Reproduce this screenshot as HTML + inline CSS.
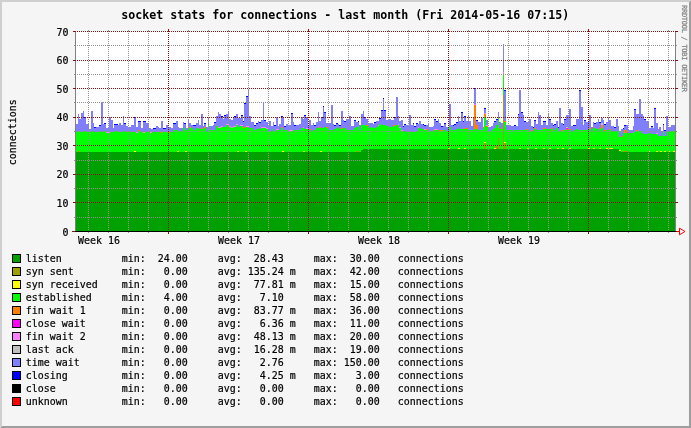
<!DOCTYPE html>
<html><head><meta charset="utf-8"><title>socket stats for connections - last month</title>
<style>
html,body{margin:0;padding:0;background:#F5F5F5;overflow:hidden}
svg{display:block;will-change:transform}
text{font-family:"DejaVu Sans Mono","Liberation Mono",monospace;fill:#000;white-space:pre}
.t{font-size:11.627px;font-weight:bold}
.l{font-size:9.966px;stroke:#000;stroke-width:0.2px}
.a{font-size:9.966px;stroke:#000;stroke-width:0.2px}
.w{font-size:7px;fill:#808080;stroke:#808080;stroke-width:0.2px}
</style></head><body>
<svg width="691" height="428" viewBox="0 0 691 428">
<rect x="0" y="0" width="691" height="428" fill="#F5F5F5"/>
<g shape-rendering="crispEdges">
<rect x="0" y="0" width="691" height="2" fill="#CFCFCF"/>
<rect x="0" y="0" width="2" height="428" fill="#CFCFCF"/>
<polygon points="691,0 691,428 0,428 2,426 689,426 689,2" fill="#9E9E9E"/>
<rect x="75" y="31" width="601" height="200" fill="#FFFFFF"/>
<path d="M75,231V124H78V114H79V119H81V113H83V111H84V117H86V124H89V129H91V111H93V123H94V127H99V125H101V102H103V124H104V123H106V128H109V117H111V120H113V128H114V124H118V125H119V123H121V125H123V116H124V123H126V126H128V127H131V125H134V117H136V127H138V121H141V128H143V121H146V123H149V128H151V129H153V128H156V126H158V127H159V128H161V121H163V128H166V125H168V127H171V128H173V123H176V121H178V127H179V128H183V122H184V123H186V128H188V119H189V123H191V125H196V123H198V120H199V125H201V114H203V126H204V123H206V127H208V118H209V126H213V125H214V122H216V116H218V112H219V114H221V116H223V119H224V115H226V114H228V112H229V119H231V120H233V117H234V116H236V114H238V118H241V115H243V121H244V103H246V96H248V90H249V116H251V122H254V125H256V123H258V121H259V122H261V120H263V103H264V120H266V122H268V125H269V121H271V126H273V122H274V125H276V117H278V126H279V124H281V116H283V118H284V126H286V124H288V125H291V113H293V122H294V125H299V124H301V117H303V119H304V115H306V117H308V125H309V120H311V125H313V123H314V125H316V122H318V112H319V121H321V117H323V106H324V112H326V123H331V105H333V124H334V125H336V123H338V124H339V125H341V111H343V120H344V121H346V119H349V116H351V126H354V120H356V122H358V121H359V125H361V114H363V111H364V117H366V119H368V123H373V124H374V122H376V121H379V118H381V110H383V98H384V110H386V120H389V119H391V120H394V117H396V97H398V116H399V121H401V120H403V126H404V124H406V125H409V115H411V125H413V123H414V126H416V123H418V124H419V121H421V124H424V125H428V123H429V127H433V126H434V119H436V121H438V119H439V123H441V126H444V123H446V127H449V104H451V125H454V124H456V122H458V116H459V121H461V112H463V121H464V116H466V121H468V116H469V121H471V126H473V117H474V88H476V120H478V122H481V118H483V127H484V108H486V120H488V127H491V126H493V123H494V121H496V119H498V112H499V122H501V123H503V44H504V90H506V125H511V126H514V125H516V126H518V114H519V90H521V112H523V115H524V121H526V122H529V119H531V126H533V127H534V120H536V124H538V112H539V115H541V125H543V121H546V125H548V114H549V119H551V123H553V125H554V124H556V121H558V127H559V108H561V123H563V124H564V119H566V115H569V109H571V126H573V125H576V119H579V90H581V107H583V125H584V120H586V122H589V115H591V127H593V122H594V123H596V122H598V119H599V122H601V118H603V120H604V124H606V122H608V118H609V120H611V126H614V127H616V119H618V126H619V131H621V129H623V128H624V125H628V130H633V126H634V109H636V114H639V99H641V114H643V116H644V119H646V121H649V128H651V126H653V128H654V108H656V123H658V129H659V127H661V131H663V124H664V130H666V116H668V127H671V125H675V231Z" fill="#8080FF"/>
<path d="M75,231V132H77V131H80V132H84V131H86V132H92V131H94V132H99V131H101V132H104V131H106V133H110V132H114V131H118V132H123V131H126V132H136V133H138V131H140V132H143V133H145V132H150V133H152V132H160V133H162V132H168V133H170V132H173V130H178V131H183V128H185V130H189V128H193V130H196V128H199V129H204V128H206V131H208V124H209V130H216V126H218V128H221V127H226V125H229V127H231V128H233V127H236V125H238V127H240V126H243V128H246V127H249V128H253V130H256V129H258V128H259V129H261V128H266V129H268V131H273V129H274V131H276V130H281V128H283V130H288V131H293V130H301V128H304V129H308V130H311V131H313V130H316V128H324V127H326V128H328V130H334V129H336V128H338V127H339V129H343V128H346V130H354V128H356V127H358V126H359V130H361V125H366V126H369V128H371V127H373V128H376V127H378V126H379V124H381V125H386V126H389V127H393V126H396V125H399V128H401V131H406V132H416V131H418V128H421V129H424V130H429V131H434V130H439V131H443V130H446V131H449V127H451V130H456V129H458V127H459V129H468V130H474V129H478V130H483V128H484V117H486V127H488V131H491V130H493V129H494V128H496V125H498V118H499V129H503V74H504V122H506V130H513V131H514V130H529V131H534V129H536V130H543V129H553V131H554V130H556V128H558V131H563V130H571V131H574V130H576V129H578V130H589V129H591V131H593V128H596V129H598V131H599V129H601V128H603V131H606V130H611V131H619V137H623V133H634V132H636V131H641V133H643V134H648V133H651V134H658V136H663V131H664V136H667V131H675V231Z" fill="#00FF00"/>
<path d="M75,231V152H361V150H363V149H619V150H621V152H675V231Z" fill="#00A000"/>
<rect x="84" y="117" width="2" height="1" fill="#0000FF"/><rect x="94" y="127" width="2" height="1" fill="#0000FF"/><rect x="99" y="125" width="2" height="1" fill="#0000FF"/><rect x="104" y="123" width="2" height="1" fill="#0000FF"/><rect x="114" y="124" width="4" height="1" fill="#0000FF"/><rect x="124" y="123" width="2" height="1" fill="#0000FF"/><rect x="134" y="117" width="2" height="1" fill="#0000FF"/><rect x="138" y="121" width="3" height="1" fill="#0000FF"/><rect x="143" y="121" width="3" height="1" fill="#0000FF"/><rect x="153" y="128" width="3" height="1" fill="#0000FF"/><rect x="163" y="128" width="3" height="1" fill="#0000FF"/><rect x="173" y="123" width="3" height="1" fill="#0000FF"/><rect x="184" y="123" width="2" height="1" fill="#0000FF"/><rect x="193" y="125" width="3" height="1" fill="#0000FF"/><rect x="204" y="123" width="2" height="1" fill="#0000FF"/><rect x="214" y="122" width="2" height="1" fill="#0000FF"/><rect x="221" y="116" width="2" height="1" fill="#0000FF"/><rect x="224" y="115" width="2" height="1" fill="#0000FF"/><rect x="234" y="116" width="2" height="1" fill="#0000FF"/><rect x="241" y="115" width="2" height="1" fill="#0000FF"/><rect x="243" y="121" width="1" height="1" fill="#0000FF"/><rect x="244" y="103" width="2" height="1" fill="#0000FF"/><rect x="246" y="96" width="2" height="1" fill="#0000FF"/><rect x="254" y="125" width="2" height="1" fill="#0000FF"/><rect x="256" y="123" width="2" height="1" fill="#0000FF"/><rect x="259" y="122" width="2" height="1" fill="#0000FF"/><rect x="264" y="120" width="2" height="1" fill="#0000FF"/><rect x="274" y="125" width="2" height="1" fill="#0000FF"/><rect x="281" y="116" width="2" height="1" fill="#0000FF"/><rect x="284" y="126" width="2" height="1" fill="#0000FF"/><rect x="291" y="113" width="2" height="1" fill="#0000FF"/><rect x="294" y="125" width="2" height="1" fill="#0000FF"/><rect x="304" y="115" width="2" height="1" fill="#0000FF"/><rect x="314" y="125" width="2" height="1" fill="#0000FF"/><rect x="321" y="117" width="2" height="1" fill="#0000FF"/><rect x="323" y="106" width="1" height="1" fill="#0000FF"/><rect x="324" y="112" width="2" height="1" fill="#0000FF"/><rect x="334" y="125" width="2" height="1" fill="#0000FF"/><rect x="336" y="123" width="2" height="1" fill="#0000FF"/><rect x="339" y="125" width="2" height="1" fill="#0000FF"/><rect x="344" y="121" width="2" height="1" fill="#0000FF"/><rect x="354" y="120" width="2" height="1" fill="#0000FF"/><rect x="358" y="121" width="1" height="1" fill="#0000FF"/><rect x="364" y="117" width="2" height="1" fill="#0000FF"/><rect x="374" y="122" width="2" height="1" fill="#0000FF"/><rect x="379" y="118" width="2" height="1" fill="#0000FF"/><rect x="381" y="110" width="2" height="1" fill="#0000FF"/><rect x="383" y="98" width="1" height="1" fill="#0000FF"/><rect x="384" y="110" width="2" height="1" fill="#0000FF"/><rect x="394" y="117" width="2" height="1" fill="#0000FF"/><rect x="403" y="126" width="1" height="1" fill="#0000FF"/><rect x="404" y="124" width="2" height="1" fill="#0000FF"/><rect x="413" y="123" width="1" height="1" fill="#0000FF"/><rect x="414" y="126" width="2" height="1" fill="#0000FF"/><rect x="416" y="123" width="2" height="1" fill="#0000FF"/><rect x="423" y="124" width="1" height="1" fill="#0000FF"/><rect x="424" y="125" width="2" height="1" fill="#0000FF"/><rect x="434" y="119" width="2" height="1" fill="#0000FF"/><rect x="436" y="121" width="2" height="1" fill="#0000FF"/><rect x="441" y="126" width="2" height="1" fill="#0000FF"/><rect x="444" y="123" width="2" height="1" fill="#0000FF"/><rect x="453" y="125" width="1" height="1" fill="#0000FF"/><rect x="454" y="124" width="2" height="1" fill="#0000FF"/><rect x="456" y="122" width="2" height="1" fill="#0000FF"/><rect x="461" y="112" width="2" height="1" fill="#0000FF"/><rect x="463" y="121" width="1" height="1" fill="#0000FF"/><rect x="464" y="116" width="2" height="1" fill="#0000FF"/><rect x="476" y="120" width="2" height="1" fill="#0000FF"/><rect x="484" y="108" width="2" height="1" fill="#0000FF"/><rect x="494" y="121" width="2" height="1" fill="#0000FF"/><rect x="496" y="119" width="2" height="1" fill="#0000FF"/><rect x="504" y="90" width="2" height="1" fill="#0000FF"/><rect x="514" y="125" width="2" height="1" fill="#0000FF"/><rect x="518" y="114" width="1" height="1" fill="#0000FF"/><rect x="521" y="112" width="2" height="1" fill="#0000FF"/><rect x="524" y="121" width="2" height="1" fill="#0000FF"/><rect x="533" y="127" width="1" height="1" fill="#0000FF"/><rect x="534" y="120" width="2" height="1" fill="#0000FF"/><rect x="543" y="121" width="3" height="1" fill="#0000FF"/><rect x="549" y="119" width="2" height="1" fill="#0000FF"/><rect x="553" y="125" width="1" height="1" fill="#0000FF"/><rect x="554" y="124" width="2" height="1" fill="#0000FF"/><rect x="558" y="127" width="1" height="1" fill="#0000FF"/><rect x="563" y="124" width="1" height="1" fill="#0000FF"/><rect x="564" y="119" width="2" height="1" fill="#0000FF"/><rect x="573" y="125" width="3" height="1" fill="#0000FF"/><rect x="579" y="90" width="2" height="1" fill="#0000FF"/><rect x="584" y="120" width="2" height="1" fill="#0000FF"/><rect x="594" y="123" width="2" height="1" fill="#0000FF"/><rect x="599" y="122" width="2" height="1" fill="#0000FF"/><rect x="604" y="124" width="2" height="1" fill="#0000FF"/><rect x="614" y="127" width="2" height="1" fill="#0000FF"/><rect x="623" y="128" width="1" height="1" fill="#0000FF"/><rect x="624" y="125" width="2" height="1" fill="#0000FF"/><rect x="634" y="109" width="2" height="1" fill="#0000FF"/><rect x="644" y="119" width="2" height="1" fill="#0000FF"/><rect x="651" y="126" width="2" height="1" fill="#0000FF"/><rect x="654" y="108" width="2" height="1" fill="#0000FF"/><rect x="663" y="124" width="1" height="1" fill="#0000FF"/><rect x="664" y="130" width="2" height="1" fill="#0000FF"/><rect x="106" y="132" width="4" height="1" fill="#FF80FF"/><rect x="136" y="132" width="2" height="1" fill="#FF80FF"/><rect x="138" y="130" width="2" height="1" fill="#FF8000"/><rect x="143" y="132" width="2" height="1" fill="#FF80FF"/><rect x="150" y="132" width="2" height="1" fill="#FF80FF"/><rect x="160" y="132" width="2" height="1" fill="#FF8000"/><rect x="168" y="132" width="2" height="1" fill="#FF8000"/><rect x="189" y="127" width="2" height="1" fill="#FF8000"/><rect x="201" y="128" width="2" height="1" fill="#FF8000"/><rect x="204" y="127" width="2" height="1" fill="#FF8000"/><rect x="208" y="123" width="1" height="1" fill="#FF8000"/><rect x="218" y="127" width="3" height="1" fill="#FF80FF"/><rect x="221" y="126" width="2" height="1" fill="#FF80FF"/><rect x="226" y="124" width="3" height="1" fill="#FF80FF"/><rect x="229" y="126" width="2" height="1" fill="#FF80FF"/><rect x="231" y="127" width="2" height="1" fill="#FF80FF"/><rect x="233" y="126" width="3" height="1" fill="#FF80FF"/><rect x="236" y="124" width="2" height="1" fill="#FF80FF"/><rect x="240" y="125" width="3" height="1" fill="#FF80FF"/><rect x="243" y="127" width="3" height="1" fill="#FF8000"/><rect x="246" y="126" width="3" height="1" fill="#FF80FF"/><rect x="261" y="127" width="5" height="1" fill="#FF80FF"/><rect x="266" y="128" width="2" height="1" fill="#FF80FF"/><rect x="276" y="129" width="3" height="1" fill="#FF80FF"/><rect x="281" y="127" width="2" height="1" fill="#FF8000"/><rect x="289" y="130" width="4" height="1" fill="#FF80FF"/><rect x="303" y="127" width="1" height="1" fill="#FF80FF"/><rect x="306" y="128" width="2" height="1" fill="#FF80FF"/><rect x="308" y="129" width="3" height="1" fill="#FF8000"/><rect x="319" y="127" width="2" height="1" fill="#FF8000"/><rect x="326" y="127" width="2" height="1" fill="#FF8000"/><rect x="341" y="128" width="2" height="1" fill="#FF8000"/><rect x="366" y="125" width="3" height="1" fill="#FF8000"/><rect x="378" y="125" width="1" height="1" fill="#FF80FF"/><rect x="388" y="125" width="1" height="1" fill="#FF80FF"/><rect x="393" y="125" width="3" height="1" fill="#FF8000"/><rect x="398" y="124" width="1" height="1" fill="#FF80FF"/><rect x="399" y="127" width="2" height="1" fill="#FF80FF"/><rect x="401" y="130" width="2" height="1" fill="#FF80FF"/><rect x="418" y="127" width="1" height="1" fill="#FF80FF"/><rect x="424" y="129" width="2" height="1" fill="#FF80FF"/><rect x="426" y="129" width="3" height="1" fill="#FF8000"/><rect x="433" y="130" width="1" height="1" fill="#FF8000"/><rect x="434" y="129" width="4" height="1" fill="#FF80FF"/><rect x="439" y="130" width="4" height="1" fill="#FF8000"/><rect x="464" y="128" width="4" height="1" fill="#FF8000"/><rect x="483" y="127" width="1" height="1" fill="#FF8000"/><rect x="484" y="116" width="2" height="1" fill="#FF8000"/><rect x="486" y="126" width="2" height="1" fill="#FF8000"/><rect x="499" y="128" width="2" height="1" fill="#FF8000"/><rect x="504" y="121" width="2" height="1" fill="#FF8000"/><rect x="526" y="129" width="3" height="1" fill="#FF8000"/><rect x="531" y="130" width="2" height="1" fill="#FF8000"/><rect x="534" y="128" width="2" height="1" fill="#FF8000"/><rect x="543" y="128" width="3" height="1" fill="#FF8000"/><rect x="551" y="128" width="2" height="1" fill="#FF8000"/><rect x="553" y="130" width="1" height="1" fill="#FF8000"/><rect x="561" y="130" width="2" height="1" fill="#FF8000"/><rect x="566" y="129" width="2" height="1" fill="#FF8000"/><rect x="568" y="129" width="3" height="1" fill="#FF8000"/><rect x="589" y="128" width="2" height="1" fill="#FF8000"/><rect x="593" y="127" width="1" height="1" fill="#FF8000"/><rect x="599" y="128" width="2" height="1" fill="#FF8000"/><rect x="604" y="130" width="2" height="1" fill="#FF8000"/><rect x="608" y="129" width="3" height="1" fill="#FF8000"/><rect x="621" y="136" width="2" height="1" fill="#FF8000"/><rect x="636" y="130" width="2" height="1" fill="#FF8000"/><rect x="656" y="133" width="2" height="1" fill="#FF80FF"/><rect x="75" y="128" width="1" height="3" fill="#0000FF"/><rect x="474" y="105" width="2" height="24" fill="#FF8000"/><rect x="474" y="104" width="2" height="1" fill="#FF80FF"/><rect x="476" y="125" width="2" height="4" fill="#FF8000"/><rect x="484" y="114" width="2" height="3" fill="#FF8000"/><rect x="484" y="113" width="2" height="1" fill="#FF80FF"/><rect x="486" y="125" width="2" height="1" fill="#FF80FF"/><rect x="503" y="95" width="1" height="54" fill="#A0A000"/><rect x="503" y="73" width="1" height="2" fill="#FF8000"/><rect x="503" y="72" width="1" height="1" fill="#FF80FF"/><rect x="601" y="125" width="2" height="3" fill="#FF8000"/><rect x="601" y="123" width="2" height="2" fill="#C0C0C0"/><rect x="566" y="127" width="2" height="1" fill="#C0C0C0"/><rect x="566" y="128" width="2" height="1" fill="#FF00FF"/><rect x="624" y="130" width="3" height="3" fill="#FF8000"/><rect x="356" y="151" width="3" height="1" fill="#A0A000"/><rect x="78" y="151" width="2" height="1" fill="#A0A000"/><rect x="248" y="151" width="1" height="1" fill="#FF8000"/><rect x="208" y="147" width="1" height="1" fill="#FFFF00"/><rect x="208" y="149" width="1" height="1" fill="#FFFF00"/><rect x="208" y="151" width="1" height="1" fill="#FFFF00"/><rect x="474" y="88" width="2" height="1" fill="#0000FF"/><rect x="484" y="143" width="2" height="6" fill="#A0A000"/><rect x="484" y="142" width="2" height="1" fill="#FFFF00"/><rect x="498" y="138" width="1" height="11" fill="#A0A000"/><rect x="495" y="146" width="3" height="3" fill="#A0A000"/><rect x="494" y="148" width="2" height="1" fill="#FFFF00"/><rect x="504" y="143" width="2" height="6" fill="#A0A000"/><rect x="504" y="142" width="2" height="1" fill="#FFFF00"/><rect x="475" y="148" width="2" height="1" fill="#A0A000"/><rect x="448" y="148" width="2" height="1" fill="#FFFF00"/><rect x="458" y="148" width="2" height="1" fill="#FFFF00"/><rect x="464" y="148" width="2" height="1" fill="#FFFF00"/><rect x="519" y="148" width="2" height="1" fill="#FFFF00"/><rect x="527" y="148" width="2" height="1" fill="#FFFF00"/><rect x="535" y="148" width="2" height="1" fill="#FFFF00"/><rect x="543" y="148" width="2" height="1" fill="#FFFF00"/><rect x="549" y="148" width="2" height="1" fill="#FFFF00"/><rect x="557" y="148" width="2" height="1" fill="#FFFF00"/><rect x="562" y="148" width="2" height="1" fill="#FFFF00"/><rect x="569" y="148" width="2" height="1" fill="#FFFF00"/><rect x="588" y="148" width="2" height="1" fill="#FFFF00"/><rect x="593" y="148" width="2" height="1" fill="#FFFF00"/><rect x="599" y="148" width="2" height="1" fill="#FFFF00"/><rect x="606" y="148" width="2" height="1" fill="#FFFF00"/><rect x="609" y="148" width="2" height="1" fill="#FFFF00"/><rect x="611" y="148" width="2" height="1" fill="#FFFF00"/><rect x="619" y="150" width="2" height="1" fill="#FFFF00"/><rect x="134" y="151" width="2" height="1" fill="#FFFF00"/><rect x="177" y="151" width="2" height="1" fill="#FFFF00"/><rect x="185" y="151" width="2" height="1" fill="#FFFF00"/><rect x="237" y="151" width="2" height="1" fill="#FFFF00"/><rect x="245" y="151" width="2" height="1" fill="#FFFF00"/><rect x="282" y="151" width="2" height="1" fill="#FFFF00"/><rect x="303" y="151" width="2" height="1" fill="#FFFF00"/><rect x="320" y="151" width="2" height="1" fill="#FFFF00"/><rect x="648" y="151" width="2" height="1" fill="#FFFF00"/><rect x="656" y="151" width="2" height="1" fill="#FFFF00"/><rect x="660" y="151" width="2" height="1" fill="#FFFF00"/><rect x="664" y="151" width="2" height="1" fill="#FFFF00"/><rect x="668" y="151" width="2" height="1" fill="#FFFF00"/><rect x="673" y="151" width="2" height="1" fill="#FFFF00"/><rect x="623" y="151" width="5" height="1" fill="#A0A000"/>
<line x1="75" y1="217.5" x2="675" y2="217.5" stroke="#909090" stroke-width="1" stroke-dasharray="1,1"/><rect x="74" y="217" width="1" height="1" fill="#909090"/><rect x="676" y="217" width="1" height="1" fill="#909090"/><line x1="75" y1="188.5" x2="675" y2="188.5" stroke="#909090" stroke-width="1" stroke-dasharray="1,1"/><rect x="74" y="188" width="1" height="1" fill="#909090"/><rect x="676" y="188" width="1" height="1" fill="#909090"/><line x1="75" y1="160.5" x2="675" y2="160.5" stroke="#909090" stroke-width="1" stroke-dasharray="1,1"/><rect x="74" y="160" width="1" height="1" fill="#909090"/><rect x="676" y="160" width="1" height="1" fill="#909090"/><line x1="75" y1="131.5" x2="675" y2="131.5" stroke="#909090" stroke-width="1" stroke-dasharray="1,1"/><rect x="74" y="131" width="1" height="1" fill="#909090"/><rect x="676" y="131" width="1" height="1" fill="#909090"/><line x1="75" y1="102.5" x2="675" y2="102.5" stroke="#909090" stroke-width="1" stroke-dasharray="1,1"/><rect x="74" y="102" width="1" height="1" fill="#909090"/><rect x="676" y="102" width="1" height="1" fill="#909090"/><line x1="75" y1="74.5" x2="675" y2="74.5" stroke="#909090" stroke-width="1" stroke-dasharray="1,1"/><rect x="74" y="74" width="1" height="1" fill="#909090"/><rect x="676" y="74" width="1" height="1" fill="#909090"/><line x1="75" y1="45.5" x2="675" y2="45.5" stroke="#909090" stroke-width="1" stroke-dasharray="1,1"/><rect x="74" y="45" width="1" height="1" fill="#909090"/><rect x="676" y="45" width="1" height="1" fill="#909090"/><line x1="88.5" y1="31" x2="88.5" y2="231" stroke="#909090" stroke-width="1" stroke-dasharray="1,1"/><rect x="88" y="30" width="1" height="1" fill="#909090"/><rect x="88" y="232" width="1" height="1" fill="#909090"/><line x1="108.5" y1="31" x2="108.5" y2="231" stroke="#909090" stroke-width="1" stroke-dasharray="1,1"/><rect x="108" y="30" width="1" height="1" fill="#909090"/><rect x="108" y="232" width="1" height="1" fill="#909090"/><line x1="128.5" y1="31" x2="128.5" y2="231" stroke="#909090" stroke-width="1" stroke-dasharray="1,1"/><rect x="128" y="30" width="1" height="1" fill="#909090"/><rect x="128" y="232" width="1" height="1" fill="#909090"/><line x1="148.5" y1="31" x2="148.5" y2="231" stroke="#909090" stroke-width="1" stroke-dasharray="1,1"/><rect x="148" y="30" width="1" height="1" fill="#909090"/><rect x="148" y="232" width="1" height="1" fill="#909090"/><line x1="188.5" y1="31" x2="188.5" y2="231" stroke="#909090" stroke-width="1" stroke-dasharray="1,1"/><rect x="188" y="30" width="1" height="1" fill="#909090"/><rect x="188" y="232" width="1" height="1" fill="#909090"/><line x1="208.5" y1="31" x2="208.5" y2="231" stroke="#909090" stroke-width="1" stroke-dasharray="1,1"/><rect x="208" y="30" width="1" height="1" fill="#909090"/><rect x="208" y="232" width="1" height="1" fill="#909090"/><line x1="228.5" y1="31" x2="228.5" y2="231" stroke="#909090" stroke-width="1" stroke-dasharray="1,1"/><rect x="228" y="30" width="1" height="1" fill="#909090"/><rect x="228" y="232" width="1" height="1" fill="#909090"/><line x1="248.5" y1="31" x2="248.5" y2="231" stroke="#909090" stroke-width="1" stroke-dasharray="1,1"/><rect x="248" y="30" width="1" height="1" fill="#909090"/><rect x="248" y="232" width="1" height="1" fill="#909090"/><line x1="268.5" y1="31" x2="268.5" y2="231" stroke="#909090" stroke-width="1" stroke-dasharray="1,1"/><rect x="268" y="30" width="1" height="1" fill="#909090"/><rect x="268" y="232" width="1" height="1" fill="#909090"/><line x1="288.5" y1="31" x2="288.5" y2="231" stroke="#909090" stroke-width="1" stroke-dasharray="1,1"/><rect x="288" y="30" width="1" height="1" fill="#909090"/><rect x="288" y="232" width="1" height="1" fill="#909090"/><line x1="328.5" y1="31" x2="328.5" y2="231" stroke="#909090" stroke-width="1" stroke-dasharray="1,1"/><rect x="328" y="30" width="1" height="1" fill="#909090"/><rect x="328" y="232" width="1" height="1" fill="#909090"/><line x1="348.5" y1="31" x2="348.5" y2="231" stroke="#909090" stroke-width="1" stroke-dasharray="1,1"/><rect x="348" y="30" width="1" height="1" fill="#909090"/><rect x="348" y="232" width="1" height="1" fill="#909090"/><line x1="368.5" y1="31" x2="368.5" y2="231" stroke="#909090" stroke-width="1" stroke-dasharray="1,1"/><rect x="368" y="30" width="1" height="1" fill="#909090"/><rect x="368" y="232" width="1" height="1" fill="#909090"/><line x1="388.5" y1="31" x2="388.5" y2="231" stroke="#909090" stroke-width="1" stroke-dasharray="1,1"/><rect x="388" y="30" width="1" height="1" fill="#909090"/><rect x="388" y="232" width="1" height="1" fill="#909090"/><line x1="408.5" y1="31" x2="408.5" y2="231" stroke="#909090" stroke-width="1" stroke-dasharray="1,1"/><rect x="408" y="30" width="1" height="1" fill="#909090"/><rect x="408" y="232" width="1" height="1" fill="#909090"/><line x1="428.5" y1="31" x2="428.5" y2="231" stroke="#909090" stroke-width="1" stroke-dasharray="1,1"/><rect x="428" y="30" width="1" height="1" fill="#909090"/><rect x="428" y="232" width="1" height="1" fill="#909090"/><line x1="468.5" y1="31" x2="468.5" y2="231" stroke="#909090" stroke-width="1" stroke-dasharray="1,1"/><rect x="468" y="30" width="1" height="1" fill="#909090"/><rect x="468" y="232" width="1" height="1" fill="#909090"/><line x1="488.5" y1="31" x2="488.5" y2="231" stroke="#909090" stroke-width="1" stroke-dasharray="1,1"/><rect x="488" y="30" width="1" height="1" fill="#909090"/><rect x="488" y="232" width="1" height="1" fill="#909090"/><line x1="508.5" y1="31" x2="508.5" y2="231" stroke="#909090" stroke-width="1" stroke-dasharray="1,1"/><rect x="508" y="30" width="1" height="1" fill="#909090"/><rect x="508" y="232" width="1" height="1" fill="#909090"/><line x1="528.5" y1="31" x2="528.5" y2="231" stroke="#909090" stroke-width="1" stroke-dasharray="1,1"/><rect x="528" y="30" width="1" height="1" fill="#909090"/><rect x="528" y="232" width="1" height="1" fill="#909090"/><line x1="548.5" y1="31" x2="548.5" y2="231" stroke="#909090" stroke-width="1" stroke-dasharray="1,1"/><rect x="548" y="30" width="1" height="1" fill="#909090"/><rect x="548" y="232" width="1" height="1" fill="#909090"/><line x1="568.5" y1="31" x2="568.5" y2="231" stroke="#909090" stroke-width="1" stroke-dasharray="1,1"/><rect x="568" y="30" width="1" height="1" fill="#909090"/><rect x="568" y="232" width="1" height="1" fill="#909090"/><line x1="608.5" y1="31" x2="608.5" y2="231" stroke="#909090" stroke-width="1" stroke-dasharray="1,1"/><rect x="608" y="30" width="1" height="1" fill="#909090"/><rect x="608" y="232" width="1" height="1" fill="#909090"/><line x1="628.5" y1="31" x2="628.5" y2="231" stroke="#909090" stroke-width="1" stroke-dasharray="1,1"/><rect x="628" y="30" width="1" height="1" fill="#909090"/><rect x="628" y="232" width="1" height="1" fill="#909090"/><line x1="648.5" y1="31" x2="648.5" y2="231" stroke="#909090" stroke-width="1" stroke-dasharray="1,1"/><rect x="648" y="30" width="1" height="1" fill="#909090"/><rect x="648" y="232" width="1" height="1" fill="#909090"/><line x1="668.5" y1="31" x2="668.5" y2="231" stroke="#909090" stroke-width="1" stroke-dasharray="1,1"/><rect x="668" y="30" width="1" height="1" fill="#909090"/><rect x="668" y="232" width="1" height="1" fill="#909090"/><rect x="75" y="31" width="1" height="200" fill="#808080"/><rect x="675" y="31" width="1" height="200" fill="#808080"/><line x1="75" y1="202.5" x2="675" y2="202.5" stroke="#8A1010" stroke-width="1" stroke-dasharray="1,1"/><rect x="73" y="202" width="3" height="1" fill="#8A1010"/><rect x="675" y="202" width="3" height="1" fill="#8A1010"/><line x1="75" y1="174.5" x2="675" y2="174.5" stroke="#8A1010" stroke-width="1" stroke-dasharray="1,1"/><rect x="73" y="174" width="3" height="1" fill="#8A1010"/><rect x="675" y="174" width="3" height="1" fill="#8A1010"/><line x1="75" y1="145.5" x2="675" y2="145.5" stroke="#8A1010" stroke-width="1" stroke-dasharray="1,1"/><rect x="73" y="145" width="3" height="1" fill="#8A1010"/><rect x="675" y="145" width="3" height="1" fill="#8A1010"/><line x1="75" y1="117.5" x2="675" y2="117.5" stroke="#8A1010" stroke-width="1" stroke-dasharray="1,1"/><rect x="73" y="117" width="3" height="1" fill="#8A1010"/><rect x="675" y="117" width="3" height="1" fill="#8A1010"/><line x1="75" y1="88.5" x2="675" y2="88.5" stroke="#8A1010" stroke-width="1" stroke-dasharray="1,1"/><rect x="73" y="88" width="3" height="1" fill="#8A1010"/><rect x="675" y="88" width="3" height="1" fill="#8A1010"/><line x1="75" y1="60.5" x2="675" y2="60.5" stroke="#8A1010" stroke-width="1" stroke-dasharray="1,1"/><rect x="73" y="60" width="3" height="1" fill="#8A1010"/><rect x="675" y="60" width="3" height="1" fill="#8A1010"/><line x1="75" y1="31.5" x2="675" y2="31.5" stroke="#8A1010" stroke-width="1" stroke-dasharray="1,1"/><rect x="73" y="31" width="3" height="1" fill="#8A1010"/><rect x="675" y="31" width="3" height="1" fill="#8A1010"/><line x1="168.5" y1="31" x2="168.5" y2="231" stroke="#8A1010" stroke-width="1" stroke-dasharray="1,1"/><rect x="168" y="29" width="1" height="2" fill="#8A1010"/><rect x="168" y="232" width="1" height="2" fill="#8A1010"/><line x1="308.5" y1="31" x2="308.5" y2="231" stroke="#8A1010" stroke-width="1" stroke-dasharray="1,1"/><rect x="308" y="29" width="1" height="2" fill="#8A1010"/><rect x="308" y="232" width="1" height="2" fill="#8A1010"/><line x1="448.5" y1="31" x2="448.5" y2="231" stroke="#8A1010" stroke-width="1" stroke-dasharray="1,1"/><rect x="448" y="29" width="1" height="2" fill="#8A1010"/><rect x="448" y="232" width="1" height="2" fill="#8A1010"/><line x1="588.5" y1="31" x2="588.5" y2="231" stroke="#8A1010" stroke-width="1" stroke-dasharray="1,1"/><rect x="588" y="29" width="1" height="2" fill="#8A1010"/><rect x="588" y="232" width="1" height="2" fill="#8A1010"/><rect x="72" y="231" width="605" height="1" fill="#000"/><rect x="72" y="231" width="3" height="1" fill="#8A1010"/></g>
<path d="M676.5,231.5H679.5M679.5,228.2V234.8L685,231.5Z" fill="none" stroke="#FF0000" stroke-width="1"/>
<text class="t" x="121.3" y="18.7" textLength="448" lengthAdjust="spacing">socket stats for connections - last month (Fri 2014-05-16 07:15)</text>
<text class="a" x="68.5" y="235.5" text-anchor="end">0</text>
<text class="a" x="68.5" y="206.9" text-anchor="end">10</text>
<text class="a" x="68.5" y="178.4" text-anchor="end">20</text>
<text class="a" x="68.5" y="149.8" text-anchor="end">30</text>
<text class="a" x="68.5" y="121.2" text-anchor="end">40</text>
<text class="a" x="68.5" y="92.6" text-anchor="end">50</text>
<text class="a" x="68.5" y="64.1" text-anchor="end">60</text>
<text class="a" x="68.5" y="35.5" text-anchor="end">70</text>
<text class="a" x="78" y="243.5">Week 16</text>
<text class="a" x="218" y="243.5">Week 17</text>
<text class="a" x="358" y="243.5">Week 18</text>
<text class="a" x="498" y="243.5">Week 19</text>
<text class="a" transform="translate(16,132.3) rotate(-90)" text-anchor="middle">connections</text>
<text class="w" transform="translate(682,5) rotate(90)" textLength="87" lengthAdjust="spacing">RRDTOOL / TOBI OETIKER</text>
<rect x="12.5" y="254.5" width="8" height="8" fill="#00A000" stroke="#000" stroke-width="1" shape-rendering="crispEdges"/><text class="l" xml:space="preserve" x="25.8" y="262" textLength="438" lengthAdjust="spacing">listen          min:  24.00     avg:  28.43     max:  30.00   connections</text>
<rect x="12.5" y="267.5" width="8" height="8" fill="#A0A000" stroke="#000" stroke-width="1" shape-rendering="crispEdges"/><text class="l" xml:space="preserve" x="25.8" y="275" textLength="438" lengthAdjust="spacing">syn sent        min:   0.00     avg: 135.24 m   max:  42.00   connections</text>
<rect x="12.5" y="280.5" width="8" height="8" fill="#FFFF00" stroke="#000" stroke-width="1" shape-rendering="crispEdges"/><text class="l" xml:space="preserve" x="25.8" y="288" textLength="438" lengthAdjust="spacing">syn received    min:   0.00     avg:  77.81 m   max:  15.00   connections</text>
<rect x="12.5" y="293.5" width="8" height="8" fill="#00FF00" stroke="#000" stroke-width="1" shape-rendering="crispEdges"/><text class="l" xml:space="preserve" x="25.8" y="301" textLength="438" lengthAdjust="spacing">established     min:   4.00     avg:   7.10     max:  58.00   connections</text>
<rect x="12.5" y="306.5" width="8" height="8" fill="#FF8000" stroke="#000" stroke-width="1" shape-rendering="crispEdges"/><text class="l" xml:space="preserve" x="25.8" y="314" textLength="438" lengthAdjust="spacing">fin wait 1      min:   0.00     avg:  83.77 m   max:  36.00   connections</text>
<rect x="12.5" y="319.5" width="8" height="8" fill="#FF00FF" stroke="#000" stroke-width="1" shape-rendering="crispEdges"/><text class="l" xml:space="preserve" x="25.8" y="327" textLength="438" lengthAdjust="spacing">close wait      min:   0.00     avg:   6.36 m   max:  11.00   connections</text>
<rect x="12.5" y="332.5" width="8" height="8" fill="#FF80FF" stroke="#000" stroke-width="1" shape-rendering="crispEdges"/><text class="l" xml:space="preserve" x="25.8" y="340" textLength="438" lengthAdjust="spacing">fin wait 2      min:   0.00     avg:  48.13 m   max:  20.00   connections</text>
<rect x="12.5" y="345.5" width="8" height="8" fill="#C0C0C0" stroke="#000" stroke-width="1" shape-rendering="crispEdges"/><text class="l" xml:space="preserve" x="25.8" y="353" textLength="438" lengthAdjust="spacing">last ack        min:   0.00     avg:  16.28 m   max:  19.00   connections</text>
<rect x="12.5" y="358.5" width="8" height="8" fill="#8080FF" stroke="#000" stroke-width="1" shape-rendering="crispEdges"/><text class="l" xml:space="preserve" x="25.8" y="366" textLength="438" lengthAdjust="spacing">time wait       min:   0.00     avg:   2.76     max: 150.00   connections</text>
<rect x="12.5" y="371.5" width="8" height="8" fill="#0000FF" stroke="#000" stroke-width="1" shape-rendering="crispEdges"/><text class="l" xml:space="preserve" x="25.8" y="379" textLength="438" lengthAdjust="spacing">closing         min:   0.00     avg:   4.25 m   max:   3.00   connections</text>
<rect x="12.5" y="384.5" width="8" height="8" fill="#000000" stroke="#000" stroke-width="1" shape-rendering="crispEdges"/><text class="l" xml:space="preserve" x="25.8" y="392" textLength="438" lengthAdjust="spacing">close           min:   0.00     avg:   0.00     max:   0.00   connections</text>
<rect x="12.5" y="397.5" width="8" height="8" fill="#FF0000" stroke="#000" stroke-width="1" shape-rendering="crispEdges"/><text class="l" xml:space="preserve" x="25.8" y="405" textLength="438" lengthAdjust="spacing">unknown         min:   0.00     avg:   0.00     max:   0.00   connections</text>
</svg></body></html>
